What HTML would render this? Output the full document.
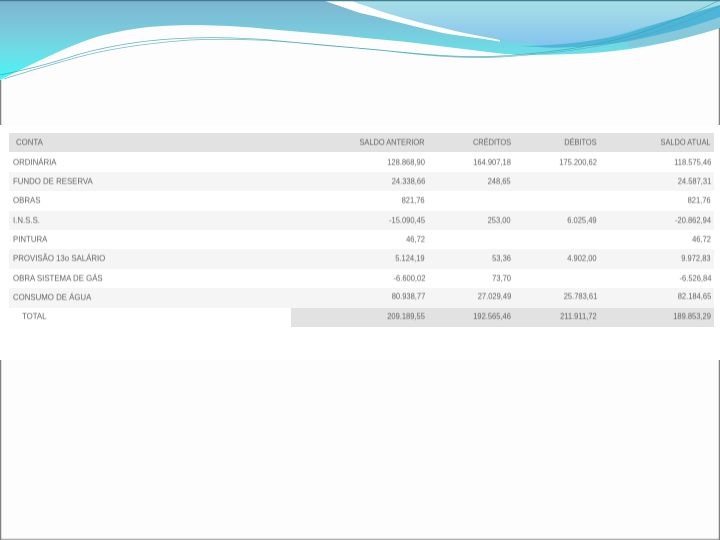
<!DOCTYPE html>
<html><head><meta charset="utf-8">
<style>
html,body{margin:0;padding:0;background:#fdfdfd}
#p{position:relative;width:720px;height:540px;overflow:hidden;background:#fdfdfd;font-family:"Liberation Sans",sans-serif}
svg{position:absolute;left:0;top:0}
#box{position:absolute;left:0;top:125px;width:720px;height:235px;background:#fff}
.r{position:absolute;left:9px;width:705px}
.r.a{background:#f5f5f5}
.r.h{background:#e2e2e2}
.t{position:absolute;font-size:8.4px;color:#5f5f5f;white-space:nowrap;line-height:10px;filter:blur(.4px);transform:scaleX(.935);transform-origin:left center}
.n{text-align:right;transform:scaleX(.9);transform-origin:right center}
.hd{transform:scaleX(.885)}
#tg{position:absolute;left:291px;top:307.5px;width:423px;height:19.5px;background:#e2e2e2}
</style></head><body>
<div id="p">
<svg width="720" height="540" viewBox="0 0 720 540">
<defs>
<linearGradient id="g1" gradientUnits="userSpaceOnUse" x1="0" y1="0" x2="0" y2="78">
<stop offset="0" stop-color="#7fb3d0"/><stop offset=".4" stop-color="#78cbdd"/><stop offset=".7" stop-color="#6ae0e8"/><stop offset="1" stop-color="#45f5f5"/>
</linearGradient>
<linearGradient id="g2" gradientUnits="userSpaceOnUse" x1="0" y1="0" x2="0" y2="46">
<stop offset="0" stop-color="#a9e0e5"/><stop offset="1" stop-color="#84c4ee"/>
</linearGradient>
</defs>
<path d="M0 0H720V28C680 41 625 53 570 54C545 55 525 55 505 54C470 50 440 46 407 42L360 37.5C330 34 300 32 267 29C240 26 200 24 167 25.7C140 27 125 30 100 36C75 43 45 58 20 70L0 80Z" fill="url(#g1)"/>
<path d="M322 0H350L360 4L500 40L500 41.6C480 38 460 36 443 33C425 29 410 25 393 21C382 18 370 15 360 13Z" fill="#fff"/>
<path d="M350 0L360 4C375 9 385 13 393 15C410 20 425 24 443 28C462 33 480 36 500 40C515 42 530 44 545 45.500C575 44 610 38 640 28C670 20 700 12 720 5V0Z" fill="url(#g2)"/>
<path d="M520 46C560 46 610 40 640 29C670 20 700 11 720 5V17C690 28 660 35 630 41C600 46 560 49 540 47Z" fill="#4db5d8"/>
<path d="M630 41C660 35 690 28 720 17V28C690 37 660 44 627 47Z" fill="#86c9da"/>
<path d="M0 75C20 71 45 65 67 58C100 47 140 41 170 39C200 37 240 37 280 41C320 45 360 48 400 52C430 55 470 58 500 56C550 53 600 46 640 33C670 23 700 10 720 0" fill="none" stroke="#3a9fb4" stroke-width=".7" opacity=".8"/>
<path d="M4 79C25 72 50 65 75 58C110 48 150 43 190 40C230 38 270 40 310 44C340 47 360 48 380 50C420 55 460 59 500 57C555 54 605 47 645 35C675 26 700 16 720 6" fill="none" stroke="#4aa9bc" stroke-width=".7" opacity=".8"/>
<path d="M0 539.300H720" stroke="#999" stroke-width="1"/>
<path d="M.6 80V540M719.400 28V540" stroke="#808080" stroke-width="1.300"/>
<path d="M0 .6H720" stroke="#3f7f98" stroke-width="1.200"/>
</svg>
<div id="box"></div>
<div class="r h" style="top:133px;height:19px"></div>
<div class="r a" style="top:172px;height:19px"></div>
<div class="r a" style="top:211px;height:19px"></div>
<div class="r a" style="top:249px;height:19.500px"></div>
<div class="r a" style="top:288px;height:19.500px"></div>
<div id="tg"></div>

<div class="t" style="left:16px;top:137px">CONTA</div>
<div class="t n hd" style="right:295px;top:137px">SALDO ANTERIOR</div>
<div class="t n hd" style="right:209px;top:137px">CRÉDITOS</div>
<div class="t n hd" style="right:123px;top:137px">DÉBITOS</div>
<div class="t n hd" style="right:9px;top:137px">SALDO ATUAL</div>

<div class="t" style="left:13px;top:156.500px">ORDINÁRIA</div>
<div class="t n" style="right:295px;top:156.500px">128.868,90</div>
<div class="t n" style="right:209px;top:156.500px">164.907,18</div>
<div class="t n" style="right:123px;top:156.500px">175.200,62</div>
<div class="t n" style="right:9px;top:156.500px">118.575,46</div>

<div class="t" style="left:13px;top:176px">FUNDO DE RESERVA</div>
<div class="t n" style="right:295px;top:176px">24.338,66</div>
<div class="t n" style="right:209px;top:176px">248,65</div>
<div class="t n" style="right:9px;top:176px">24.587,31</div>

<div class="t" style="left:13px;top:195px">OBRAS</div>
<div class="t n" style="right:295px;top:195px">821,76</div>
<div class="t n" style="right:9px;top:195px">821,76</div>

<div class="t" style="left:13px;top:214.500px">I.N.S.S.</div>
<div class="t n" style="right:295px;top:214.500px">-15.090,45</div>
<div class="t n" style="right:209px;top:214.500px">253,00</div>
<div class="t n" style="right:123px;top:214.500px">6.025,49</div>
<div class="t n" style="right:9px;top:214.500px">-20.862,94</div>

<div class="t" style="left:13px;top:234px">PINTURA</div>
<div class="t n" style="right:295px;top:234px">46,72</div>
<div class="t n" style="right:9px;top:234px">46,72</div>

<div class="t" style="left:13px;top:253px">PROVISÃO 13o SALÁRIO</div>
<div class="t n" style="right:295px;top:253px">5.124,19</div>
<div class="t n" style="right:209px;top:253px">53,36</div>
<div class="t n" style="right:123px;top:253px">4.902,00</div>
<div class="t n" style="right:9px;top:253px">9.972,83</div>

<div class="t" style="left:13px;top:272.500px">OBRA SISTEMA DE GÁS</div>
<div class="t n" style="right:295px;top:272.500px">-6.600,02</div>
<div class="t n" style="right:209px;top:272.500px">73,70</div>
<div class="t n" style="right:9px;top:272.500px">-6.526,84</div>

<div class="t" style="left:13px;top:291.500px">CONSUMO DE ÁGUA</div>
<div class="t n" style="right:295px;top:291px">80.938,77</div>
<div class="t n" style="right:209px;top:291px">27.029,49</div>
<div class="t n" style="right:123px;top:291px">25.783,61</div>
<div class="t n" style="right:9px;top:291px">82.184,65</div>

<div class="t" style="left:22px;top:311px">TOTAL</div>
<div class="t n" style="right:295px;top:311px">209.189,55</div>
<div class="t n" style="right:209px;top:311px">192.565,46</div>
<div class="t n" style="right:123px;top:311px">211.911,72</div>
<div class="t n" style="right:9px;top:311px">189.853,29</div>
</div>
</body></html>
